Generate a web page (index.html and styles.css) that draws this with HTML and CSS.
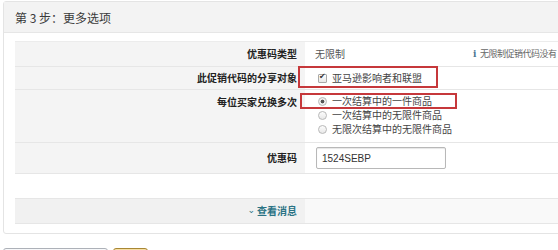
FILE: index.html
```html
<!DOCTYPE html>
<html lang="zh-CN">
<head>
  <meta charset="UTF-8" />
  <meta name="viewport" content="width=device-width, initial-scale=1.0"/>
  <title>第 3 步：更多选项</title>
  <link rel="stylesheet" href="styles.css">
</head>
<body>
  <div class="panel">
    <div class="panel-head">第 3 步：更多选项</div>
    <div class="panel-body">
      <div class="form-table">
        <div class="row">
          <div class="label">优惠码类型</div>
          <div class="value split">
            <span>无限制</span>
            <span class="hint"><span class="hint-icon">i</span>无限制促销代码没有</span>
          </div>
        </div>
        <div class="row">
          <div class="label">此促销代码的分享对象</div>
          <div class="value">
            <label class="option"><input type="checkbox" checked> 亚马逊影响者和联盟</label>
          </div>
          <span class="mark mark-share"></span>
        </div>
        <div class="row row-top">
          <div class="label">每位买家兑换多次</div>
          <div class="value options">
            <label class="option"><input type="radio" name="times" checked> 一次结算中的一件商品</label>
            <label class="option"><input type="radio" name="times"> 一次结算中的无限件商品</label>
            <label class="option"><input type="radio" name="times"> 无限次结算中的无限件商品</label>
          </div>
          <span class="mark mark-times"></span>
        </div>
        <div class="row row-last">
          <div class="label">优惠码</div>
          <div class="value">
            <input class="code-input" type="text" value="1524SEBP">
          </div>
        </div>
      </div>

      <div class="form-table more">
        <div class="row">
          <div class="label"><a href="#" class="more-link"><span class="chev">&#x2304;</span>查看消息</a></div>
          <div class="value"></div>
        </div>
      </div>
    </div>
  </div>

  <div class="actions">
    <button class="btn" aria-label="取消"></button>
    <button class="btn btn-primary" aria-label="查看"></button>
  </div>
</body>
</html>
```

FILE: styles.css
```css
body {
  margin: 0;
  padding: 0;
  overflow: hidden;
  font-family: "Noto Sans CJK SC", "Liberation Sans", sans-serif;
  font-size: 10px;
  color: #333;
  background-color: #fff;
}
.panel {
  width: 640px;
  margin: 1px 0 0 3px;
  border: 1px solid #e4e4e4;
  border-radius: 3px;
}
.panel-head {
  height: 30px;
  padding-left: 11px;
  display: flex;
  align-items: center;
  font-size: 12px;
  color: #3a3a3a;
  background-color: #f3f3f3;
  border-bottom: 1px solid #e6e6e6;
}
.panel-body {
  padding: 8px 0 9px 11px;
}
.form-table {
  border-top: 1px solid #ececec;
}
.row {
  position: relative;
  display: grid;
  grid-template-columns: 290px 1fr;
  border-bottom: 1px solid #e6e6e6;
}
.label {
  display: flex;
  align-items: center;
  justify-content: flex-end;
  padding-right: 8px;
  font-weight: bold;
  color: #222;
  background-color: #f4f4f4;
  line-height: 14px;
}
.value {
  display: flex;
  align-items: center;
  padding-left: 10px;
  color: #555;
  line-height: 14px;
}
.row:nth-child(1) {
  height: 24px;
}
.row:nth-child(2) {
  height: 22px;
}
.row-top .label {
  align-items: flex-start;
  padding-top: 5px;
}
.row-last {
  height: 30px;
}
.split {
  gap: 128px;
}
.hint {
  font-size: 9px;
  letter-spacing: -0.5px;
  color: #666;
  white-space: nowrap;
}
.hint-icon {
  display: inline-block;
  width: 7px;
  font-family: "DejaVu Serif", serif;
  font-weight: bold;
  color: #4d7792;
}
.options {
  flex-direction: column;
  align-items: flex-start;
  padding-top: 4px;
  padding-bottom: 6px;
}
.option {
  display: flex;
  align-items: center;
  height: 14px;
  color: #444;
}
.option input {
  appearance: none;
  position: relative;
  box-sizing: border-box;
  width: 9px;
  height: 9px;
  margin: 0 5px 0 3px;
  border: 1px solid #a9a9a9;
  background: linear-gradient(#fdfdfd, #e8e8e8);
}
.option input[type="radio"] {
  border-radius: 50%;
  border-color: #b8b8b8;
}
.option input[type="radio"]:checked {
  background: radial-gradient(circle, #555 0, #555 1.6px, #eee 2.2px);
}
.option input[type="checkbox"] {
  border-radius: 1px;
}
.option input[type="checkbox"]:checked::after {
  content: "\2714";
  position: absolute;
  left: 0;
  top: -3px;
  font-family: "DejaVu Sans", sans-serif;
  font-size: 8px;
  color: #333;
}
.mark {
  position: absolute;
  border: 2px solid #c6383b;
  pointer-events: none;
}
.mark-share {
  left: 283px;
  top: -1px;
  width: 136px;
  height: 18px;
}
.mark-times {
  left: 285px;
  top: 3px;
  width: 153px;
  height: 12px;
}
.code-input {
  width: 130px;
  height: 22px;
  box-sizing: border-box;
  margin-left: 1px;
  padding: 0 5px;
  border: 1px solid #b8b8b8;
  border-radius: 2px;
  box-shadow: inset 0 1px 1px #e6e6e6;
  font-family: "Liberation Sans", sans-serif;
  font-size: 10px;
  color: #333;
}
.more {
  margin-top: 24px;
  border-top-color: #e6e6e6;
}
.more .row {
  height: 24px;
}
.more .value {
  background-color: #f9f9f9;
}
.more .label {
  background-color: #f1f1f1;
}
.more-link {
  color: #2a7384;
  text-decoration: none;
}
.chev {
  display: inline-block;
  margin-right: 2px;
  font-family: "DejaVu Sans", sans-serif;
  font-size: 9px;
  font-weight: normal;
  transform: translateY(-2px);
}
.actions {
  display: flex;
  gap: 5px;
  margin: 14px 0 0 3px;
}
.btn {
  width: 105px;
  height: 24px;
  border: 1px solid #adb1b8;
  border-radius: 3px;
  background: linear-gradient(#f7f8fa, #e7e9ec);
}
.btn-primary {
  width: 35px;
  border-color: #a88734;
  background: linear-gradient(#f7dfa5, #f0c14b);
}
```
